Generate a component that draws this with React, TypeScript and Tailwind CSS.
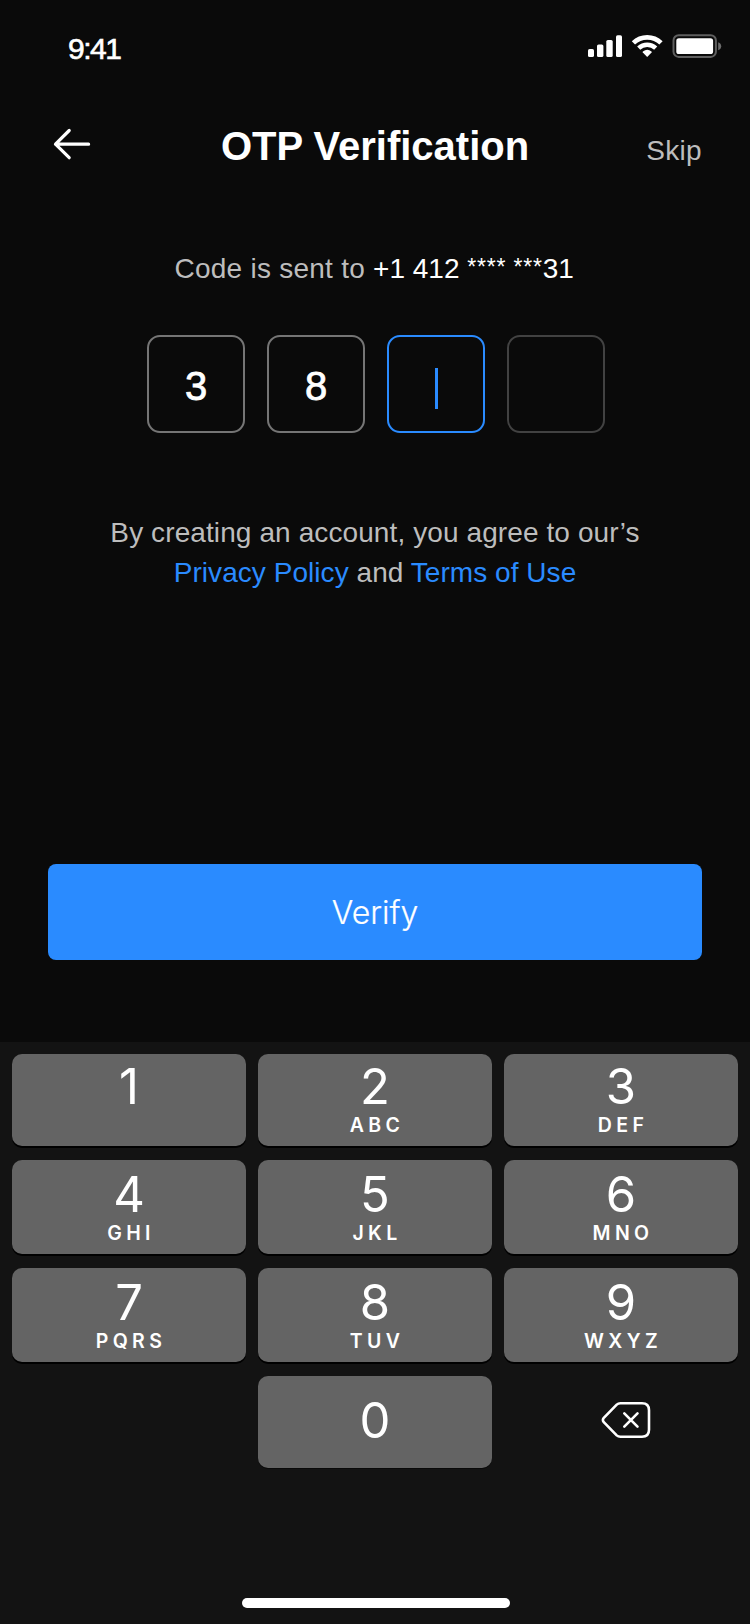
import React from "react";

type KeyDef = { digit: string; letters: string };

const rows: KeyDef[][] = [
  [
    { digit: "1", letters: "" },
    { digit: "2", letters: "ABC" },
    { digit: "3", letters: "DEF" },
  ],
  [
    { digit: "4", letters: "GHI" },
    { digit: "5", letters: "JKL" },
    { digit: "6", letters: "MNO" },
  ],
  [
    { digit: "7", letters: "PQRS" },
    { digit: "8", letters: "TUV" },
    { digit: "9", letters: "WXYZ" },
  ],
];

function StatusIcons() {
  return (
    <svg width="136" height="26" viewBox="0 0 136 26" fill="none">
      <g fill="#fff">
        <rect x="1" y="15" width="6" height="8" rx="1.6" />
        <rect x="10" y="10.5" width="6.4" height="12.5" rx="1.6" />
        <rect x="19.3" y="6" width="6.4" height="17" rx="1.6" />
        <rect x="29" y="1.3" width="6" height="21.7" rx="1.6" />
        <path d="M60.2 22.9 L55.8 18.4 Q55.4 17.9 55.9 17.5 Q60.2 14.1 64.5 17.5 Q65 17.9 64.6 18.4 Z" />
      </g>
      <path d="M51.7 14.2 A12.4 12.4 0 0 1 68.7 14.2" stroke="#fff" strokeWidth="4.5" />
      <path d="M46.4 8.9 A19.9 19.9 0 0 1 74 8.9" stroke="#fff" strokeWidth="4.7" />
      <rect x="86.5" y="1.3" width="42.4" height="21.6" rx="5.2" stroke="#fff" strokeOpacity="0.35" strokeWidth="2" />
      <rect x="89.3" y="4.2" width="36.8" height="15.8" rx="2.6" fill="#fff" />
      <path d="M131.2 8.2 Q134.2 9.4 134.2 12.2 Q134.2 15 131.2 16.2 Z" fill="#fff" fillOpacity="0.4" />
    </svg>
  );
}

function Key({ digit, letters, className }: KeyDef & { className: string }) {
  return (
    <button className={`flex w-[234px] flex-col items-center rounded-[10px] bg-[#646464] text-white ${className}`}>
      <span className="text-[49px] leading-[48px] font-normal">{digit}</span>
      {letters && (
        <span className="mt-[4px] pl-[4px] text-[19.5px] leading-[20px] font-semibold tracking-[4.4px]">{letters}</span>
      )}
    </button>
  );
}

export default function App() {
  return (
    <div className="flex h-[1624px] w-[750px] flex-col overflow-hidden bg-[#0a0a0a] font-['Liberation_Sans',Arial,sans-serif] text-[#bdbdbd]">
      <div className="flex h-[88px] items-start justify-between pt-[31px] pr-[27px] pl-[68px]">
        <span className="text-[30px] leading-[36px] tracking-[-1.5px] text-white [-webkit-text-stroke:0.6px_#fff]">9:41</span>
        <div className="pt-[3px]">
          <StatusIcons />
        </div>
      </div>

      <header className="mt-[34px] grid h-12 grid-cols-[160px_1fr_160px] items-baseline px-[48px]">
        <button aria-label="Back" className="self-start pt-[5px] pl-[5px]">
          <svg width="38" height="34" viewBox="0 0 38 34" fill="none" stroke="#fff" strokeWidth="3.2" strokeLinecap="round" strokeLinejoin="round">
            <path d="M16.2 3.5 L2.5 17.2 L16.2 30.7 M2.5 17.2 H35.6" />
          </svg>
        </button>
        <h1 className="text-center text-[40px] leading-[48px] font-bold whitespace-nowrap text-white">OTP Verification</h1>
        <button className="text-right text-[28px] leading-[40px] tracking-[0.3px]">Skip</button>
      </header>

      <p className="mt-[79px] pl-[174.5px] text-[28px] leading-[40px] whitespace-nowrap">
        <span className="tracking-[0.25px]">Code is sent to </span>
        <span className="text-white">
          +1 412 <span className="align-[3px] text-[23px] leading-none tracking-[0.8px]">**** ***</span>31
        </span>
      </p>

      <div className="mt-[46px] flex gap-[22px] pl-[147px] text-[40px] text-white">
        <div className="flex h-[98px] w-[98px] items-center justify-center rounded-[13px] border-2 border-[#757575] pt-[4px] [-webkit-text-stroke:0.8px_#fff]">3</div>
        <div className="flex h-[98px] w-[98px] items-center justify-center rounded-[13px] border-2 border-[#757575] pt-[4px] [-webkit-text-stroke:0.8px_#fff]">8</div>
        <div className="flex h-[98px] w-[98px] items-center justify-center rounded-[13px] border-2 border-[#2a8bff] pt-[9px] pl-[1px]">
          <div className="h-[41px] w-[3px] bg-[#2a8bff]" />
        </div>
        <div className="h-[98px] w-[98px] rounded-[13px] border-2 border-[#424242]" />
      </div>

      <div className="mt-[80px] text-center text-[28px] leading-[40px] whitespace-nowrap">
        <p className="tracking-[0.1px]">By creating an account, you agree to our’s</p>
        <p className="tracking-[0.05px]">
          <a className="text-[#2a8bff]">Privacy Policy</a> and <a className="text-[#2a8bff]">Terms of Use</a>
        </p>
      </div>

      <button className="mx-[48px] mt-[271px] h-[96px] shrink-0 rounded-[8px] bg-[#2a8bff] pt-[2px] font-['Inter',sans-serif] text-[32px] [font-weight:350] text-white [-webkit-text-stroke:0.2px_#fff]">Verify</button>

      <div className="mt-[82px] flex h-[582px] shrink-0 flex-col gap-[14px] bg-[#131313] px-3 pt-3 font-['Inter',sans-serif]">
        {rows.map((row, i) => (
          <div key={i} className="flex gap-3">
            {row.map((k) => (
              <Key key={k.digit} {...k} className={i === 0 ? "h-[92px] pt-[9px] shadow-[0_2px_0_#000]" : "h-[94px] pt-[11px] shadow-[0_2px_0_#000]"} />
            ))}
          </div>
        ))}
        <div className="flex gap-3 pl-[246px]">
          <Key digit="0" letters="" className="h-[92px] pt-[21px] shadow-[0_1px_0_#0a0a0a]" />
          <button aria-label="Delete" className="flex w-[234px] justify-center pt-[25px] pl-[9px]">
            <svg width="50" height="38" viewBox="0 0 50 38" fill="none" stroke="#fff" strokeWidth="2.6" strokeLinecap="round" strokeLinejoin="round">
              <path d="M19.5 2.2 H41 Q48 2.2 48 9.2 V28.8 Q48 35.8 41 35.8 H19.5 Q17.2 35.8 15.7 34.4 L2.8 21.2 Q1 19 2.8 16.8 L15.7 3.6 Q17.2 2.2 19.5 2.2 Z" />
              <path d="M23.3 12.4 L36.5 25.6 M36.5 12.4 L23.3 25.6" />
            </svg>
          </button>
        </div>
        <div className="mt-[116px] ml-[230px] h-[10px] w-[268px] rounded-full bg-white" />
      </div>
    </div>
  );
}
